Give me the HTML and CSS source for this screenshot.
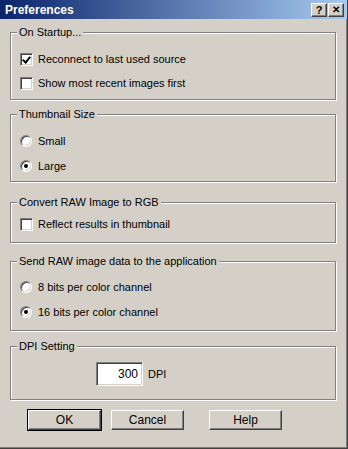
FILE: index.html
```html
<!DOCTYPE html>
<html>
  <head>
    <title>Preferences</title>
    <link rel="stylesheet" href="styles.css">
  </head>
  <body>
    <div class="window">
      <div class="titlebar">
        <span class="title">Preferences</span>
        <div class="caption-buttons">
          <span class="cap-btn">?</span>
          <span class="cap-btn cap-close">&#x2715;</span>
        </div>
      </div>

      <div class="content">
        <!-- On startup -->
        <div class="group group-startup">
          <span class="group-title">On Startup...</span>
          <div class="row"><span class="check checked"></span>Reconnect to last used source</div>
          <div class="row"><span class="check"></span>Show most recent images first</div>
        </div>

        <div class="group group-thumb">
          <span class="group-title">Thumbnail Size</span>
          <div class="row"><span class="radio"></span>Small</div>
          <div class="row"><span class="radio selected"></span>Large</div>
        </div>

        <div class="group group-convert">
          <span class="group-title">Convert RAW Image to RGB</span>
          <div class="row"><span class="check"></span>Reflect results in thumbnail</div>
        </div>

        <div class="group group-send">
          <span class="group-title">Send RAW image data to the application</span>
          <div class="row"><span class="radio"></span>8 bits per color channel</div>
          <div class="row"><span class="radio selected"></span>16 bits per color channel</div>
        </div>

        <div class="group group-dpi">
          <span class="group-title">DPI Setting</span>
          <div class="dpi-row">
            <span class="field">300</span>
            <span>DPI</span>
          </div>
        </div>

        <div class="buttons">
          <span class="btn btn-default"><span class="btn-face">OK</span></span>
          <span class="btn"><span class="btn-face">Cancel</span></span>
          <span class="btn btn-help"><span class="btn-face">Help</span></span>
        </div>
      </div>
    </div>
  </body>
</html>
```

FILE: styles.css
```css
html, body {
  margin: 0;
  padding: 0;
}

body {
  font-family: "Liberation Sans", Arial, sans-serif;
  font-size: 11px;
  color: #000;
  background: #d4d0c8;
}

.window {
  width: 348px;
  height: 449px;
  box-sizing: border-box;
  background: #d4d0c8;
  border-right: 1px solid #404040;
  border-bottom: 1px solid #404040;
  box-shadow: inset -1px -1px #808080;
}

.titlebar {
  height: 19px;
  display: flex;
  align-items: center;
  justify-content: space-between;
  padding: 0 3px 0 5px;
  background: linear-gradient(to right, #0a246a, #a6caf0);
}

.title {
  color: #fff;
  font-weight: bold;
  font-size: 12px;
  font-family: "Liberation Sans", Arial, sans-serif;
}

.caption-buttons {
  display: flex;
  gap: 1px;
}

.cap-btn {
  width: 16px;
  height: 14px;
  box-sizing: border-box;
  background: #d4d0c8;
  border-top: 1px solid #fff;
  border-left: 1px solid #fff;
  border-right: 1px solid #404040;
  border-bottom: 1px solid #404040;
  box-shadow: inset -1px -1px #808080;
  font-weight: bold;
  font-size: 11px;
  line-height: 12px;
  text-align: center;
}

.cap-close {
  font-size: 10px;
}

.content {
  padding: 13px 0 0 10px;
}

.group {
  position: relative;
  width: 326px;
  box-sizing: border-box;
  border: 1px solid #808080;
  box-shadow: inset 1px 1px #fff, 1px 1px #fff;
  padding: 14px 0 0 9px;
}

.group-title {
  position: absolute;
  top: -8px;
  left: 6px;
  padding: 0 2px;
  background: #d4d0c8;
  line-height: 14px;
}

.group-startup { height: 68px; }
.group-thumb { height: 68px; margin-top: 14px; padding-top: 13px; }
.group-convert { height: 41px; margin-top: 20px; padding-top: 9px; }
.group-send { height: 70px; margin-top: 18px; padding-top: 12px; }
.group-dpi { height: 54px; margin-top: 15px; padding-top: 15px; }

.row {
  height: 25px;
  display: flex;
  align-items: center;
  gap: 5px;
}

.group-startup .row,
.group-convert .row {
  height: 24px;
}

.check {
  width: 13px;
  height: 13px;
  box-sizing: border-box;
  background: #fff;
  border-top: 1px solid #808080;
  border-left: 1px solid #808080;
  border-right: 1px solid #fff;
  border-bottom: 1px solid #fff;
  box-shadow: inset 1px 1px #404040, inset -1px -1px #d4d0c8;
  position: relative;
}

.check.checked::after {
  content: "";
  position: absolute;
  left: 3px;
  top: 1px;
  width: 3px;
  height: 6px;
  border-right: 2px solid #000;
  border-bottom: 2px solid #000;
  transform: rotate(40deg);
}

.radio {
  width: 12px;
  height: 12px;
  box-sizing: border-box;
  border-radius: 50%;
  background: #fff;
  border: 1px solid;
  border-color: #808080 #fff #fff #808080;
  box-shadow: inset 1px 1px #404040, inset -1px -1px #d4d0c8;
  margin-right: 1px;
  display: flex;
  align-items: center;
  justify-content: center;
}

.radio.selected::after {
  content: "";
  width: 4px;
  height: 4px;
  border-radius: 50%;
  background: #000;
}

.dpi-row {
  display: flex;
  align-items: center;
  gap: 5px;
  padding-left: 76px;
}

.field {
  width: 47px;
  height: 24px;
  box-sizing: border-box;
  background: #fff;
  border-top: 1px solid #808080;
  border-left: 1px solid #808080;
  border-right: 1px solid #fff;
  border-bottom: 1px solid #fff;
  box-shadow: inset 1px 1px #404040, inset -1px -1px #d4d0c8;
  text-align: right;
  padding: 4px 4px 0 0;
  font-size: 12px;
}

.buttons {
  display: flex;
  gap: 8px;
  padding: 9px 0 0 17px;
}

.btn {
  width: 75px;
  height: 22px;
  box-sizing: border-box;
  border: 1px solid transparent;
  display: flex;
}

.btn-default {
  border-color: #000;
}

.btn-face {
  flex: 1;
  display: flex;
  align-items: center;
  justify-content: center;
  background: #d4d0c8;
  border-top: 1px solid #fff;
  border-left: 1px solid #fff;
  border-right: 1px solid #404040;
  border-bottom: 1px solid #404040;
  box-shadow: inset -1px -1px #808080;
  font-size: 12px;
}

.btn-help {
  margin-left: 15px;
}
```
